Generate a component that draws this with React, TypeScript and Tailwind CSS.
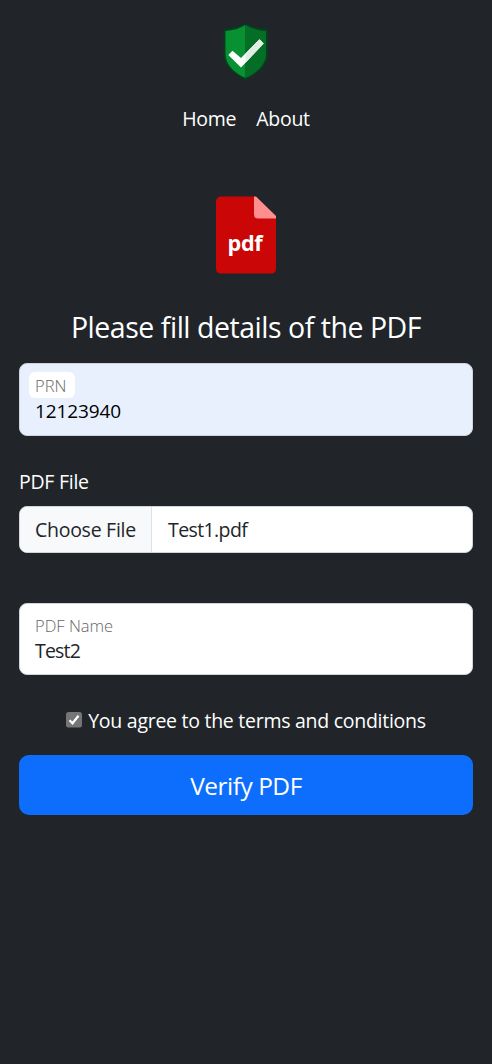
import React from "react";

function ShieldLogo() {
  return (
    <svg width="46" height="58" viewBox="0 0 46 58" aria-hidden="true">
      <path d="M22.500 1C17 5 9 6.500 0.500 7v25c0 12 10 20 22 26 12-6 22.500-14 22.500-26V7C36.500 6.500 28.500 5 22.500 1Z" fill="#063f1c" />
      <path d="M22.500 3C17 6.500 10 8.500 2.500 9v23c0 11 9 19 20 24Z" fill="#079132" />
      <path d="M22.500 3c6 3.500 13 5.500 20.500 6v23c0 11-9.500 19-20.500 24Z" fill="#056e26" />
      <path d="M5.300 33 9.500 28.700 18 36 36.500 17.200 40.700 21.500 18 45.500Z" fill="#fff" />
      <path d="M22.500 31.400 36.500 17.200 40.700 21.500 22.500 40.700Z" fill="#e1eee4" />
    </svg>
  );
}

function PdfIcon() {
  return (
    <svg width="60" height="78" viewBox="0 0 60 78" role="img" aria-label="pdf">
      <path d="M5 .5h33l22 21V73a4.500 4.500 0 0 1-4.500 4.500H5A5 5 0 0 1 0 73V5.500a5 5 0 0 1 5-5Z" fill="#ca0606" />
      <path d="M38 .5h2L60 20v2.500H42a4 4 0 0 1-4-4Z" fill="#ff8e8e" />
      <text x="11.500" y="55" textLength="35" lengthAdjust="spacingAndGlyphs" fontFamily="Open Sans, sans-serif" fontWeight="700" fontSize="22" fill="#fff">pdf</text>
    </svg>
  );
}

export default function App() {
  return (
    <div className="flex min-h-[1064px] w-full flex-col items-center bg-[#212529] px-[19px] pt-[22px] font-['Open_Sans',sans-serif] text-[19.500px] leading-[30px] tracking-[-0.270px] text-white">
      <header className="flex flex-col items-center">
        <ShieldLogo />
        <nav className="mt-[24px] flex gap-[20px]">
          <a href="#home">Home</a>
          <a href="#about">About</a>
        </nav>
      </header>
      <main className="mt-[62px] flex w-full flex-col items-center">
        <PdfIcon />
        <h1 className="mt-[35px] text-[28.500px] leading-[36px] tracking-[-0.470px] whitespace-nowrap">Please fill details of the PDF</h1>
        <section className="mt-[18px] h-[73px] w-full rounded-[8px] border border-[#ced4da] bg-[#e8f0fe] px-[9px] pt-[8px] text-black">
          <label className="block h-[26px] w-[46px] rounded-[6px] bg-white pl-[6px] text-[16.500px] leading-[28px] font-light tracking-normal text-[#666]">PRN</label>
          <div className="-mt-[2px] pl-[6px] text-[19px] tracking-[-0.100px]">12123940</div>
        </section>
        <label className="mt-[31px] w-full">PDF File</label>
        <section className="mt-[9px] flex h-[47px] w-full overflow-hidden rounded-[8px] border border-[#ced4da] bg-white leading-[46px] text-[#212529]">
          <button className="w-[132px] border-r border-[#dee2e6] bg-[#f8f9fa] pl-[15px] text-left">Choose File</button>
          <span className="pl-[16px] tracking-[-0.600px]">Test1.pdf</span>
        </section>
        <section className="mt-[50px] h-[72px] w-full rounded-[8px] border border-[#ced4da] bg-white px-[15px] pt-[8px] text-[#212529]">
          <label className="block h-[26px] text-[16.500px] leading-[28px] font-light tracking-normal text-[#666]">PDF Name</label>
          <div className="-mt-[2px] tracking-[-0.800px]">Test2</div>
        </section>
        <label className="mt-[31px] flex items-center gap-[6px] whitespace-nowrap">
          <svg className="-mt-[3px]" width="16" height="16" viewBox="0 0 16 16" aria-hidden="true">
            <rect width="16" height="15.500" rx="2.500" fill="#757575" />
            <path d="m3.500 8.300 3 3 6-7.500" fill="none" stroke="#fff" strokeWidth="2.200" />
          </svg>
          <span>You agree to the terms and conditions</span>
        </label>
        <button className="mt-[19px] h-[60px] w-full rounded-[10px] bg-[#0d6efd] pt-[2px] text-[24.500px] tracking-[-0.500px]">Verify PDF</button>
      </main>
    </div>
  );
}
